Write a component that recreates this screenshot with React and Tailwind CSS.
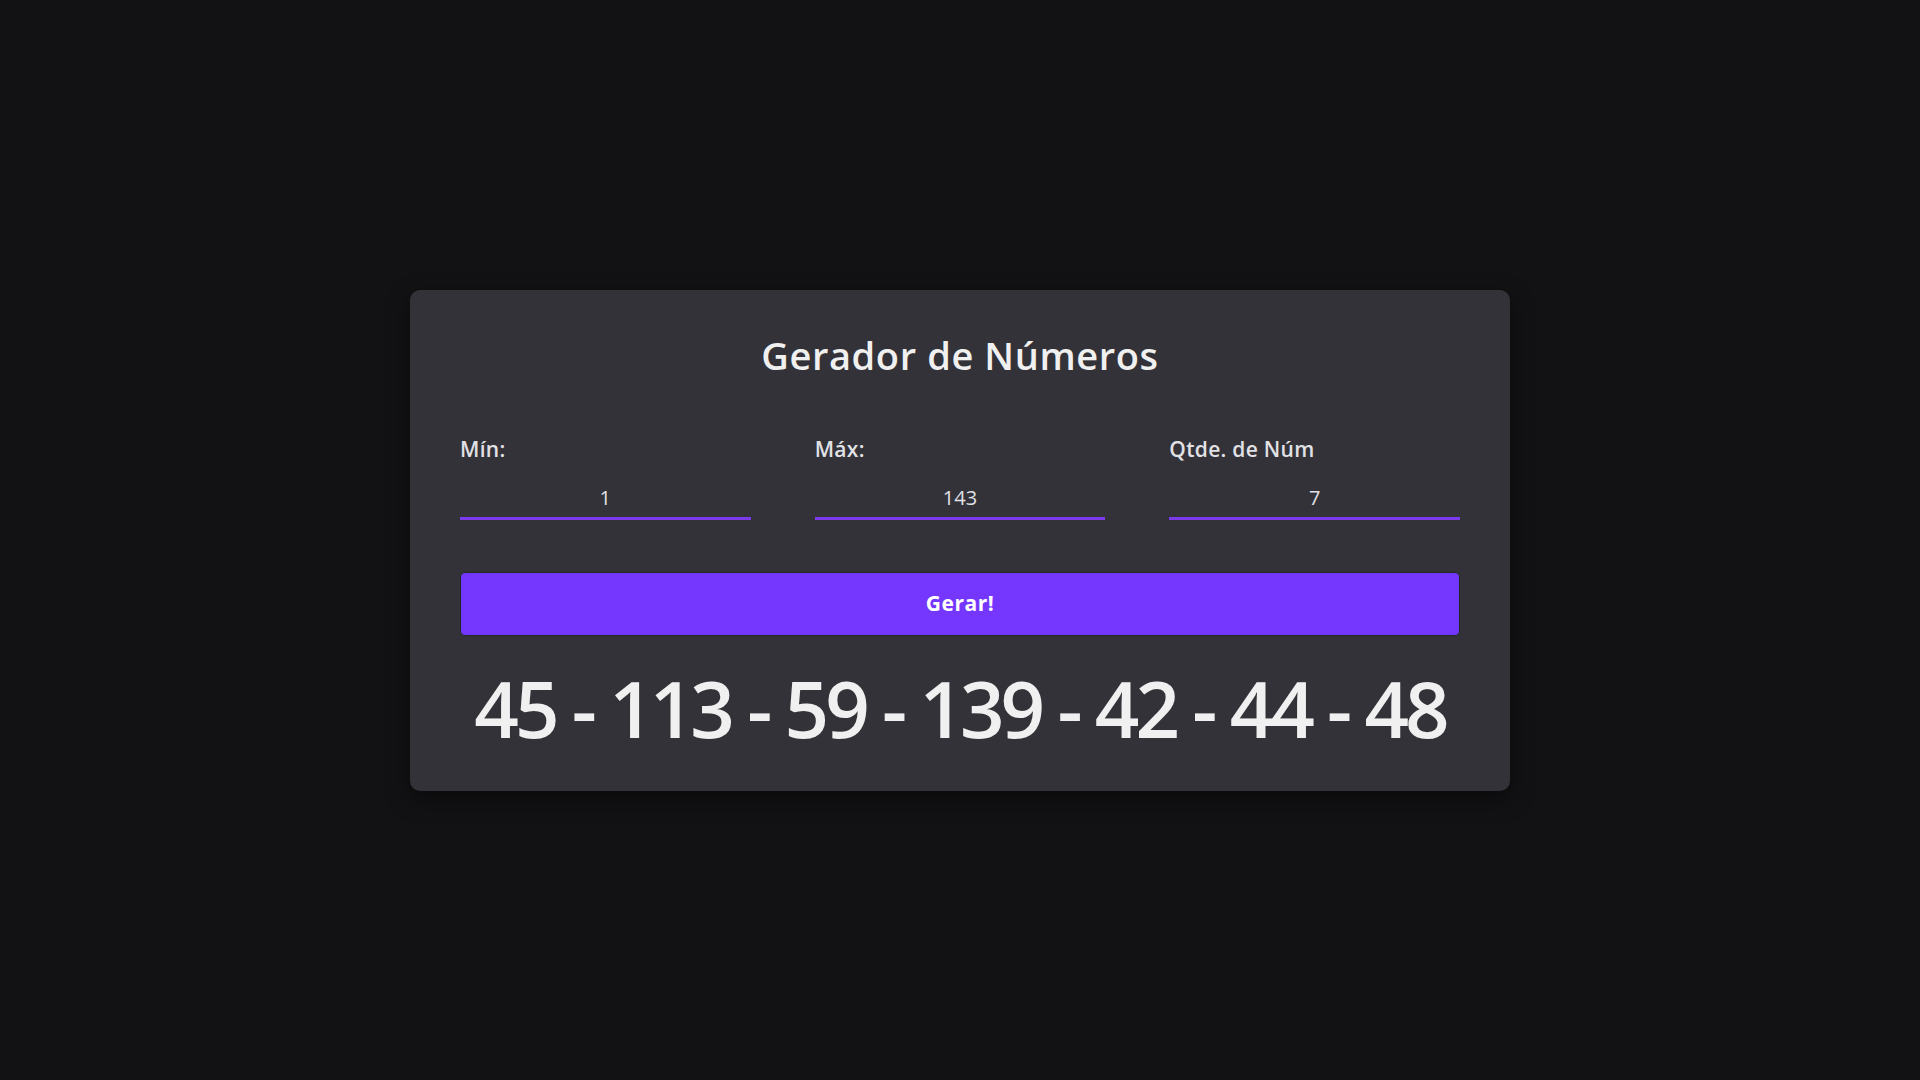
import React, { useState } from 'react';

const Field = ({ label, value, onChange }) => (
    <label className="flex flex-col">
        <span className="text-[21px] font-semibold text-[#e1e1e6] leading-[30px] tracking-[0.3px]">{label}</span>
        <input
            type="number"
            value={value}
            onChange={(e) => onChange(e.target.value)}
            className="mt-[14px] h-[42px] bg-transparent text-center text-[20px] text-[#e1e1e6] outline-none border-b-[3px] border-[#7c3aed] [appearance:textfield] [&::-webkit-inner-spin-button]:appearance-none"
        />
    </label>
);

const App = () => {
    const [min, setMin] = useState('1');
    const [max, setMax] = useState('143');
    const [qtd, setQtd] = useState('7');
    const [nums, setNums] = useState([45, 113, 59, 139, 42, 44, 48]);

    const gerar = () => {
        const a = Number(min), b = Number(max), n = Number(qtd);
        const out = [];
        for (let i = 0; i < n; i++) out.push(Math.floor(Math.random() * (b - a + 1)) + a);
        setNums(out);
    };

    return (
        <div className="min-h-screen bg-[#121214] flex items-center justify-center font-['Open_Sans',sans-serif]">
            <div className="w-[1100px] bg-[#323238] rounded-[10px] px-[50px] pt-[38px] pb-[33px] shadow-[0_8px_24px_rgba(0,0,0,0.45)]">
                <h1 className="text-center text-[38px] font-semibold text-[#f0f0f0] leading-[54px] tracking-[0.6px]">Gerador de Números</h1>

                <div className="mt-[52px] grid grid-cols-3 gap-16">
                    <Field label="Mín:" value={min} onChange={setMin} />
                    <Field label="Máx:" value={max} onChange={setMax} />
                    <Field label="Qtde. de Núm" value={qtd} onChange={setQtd} />
                </div>

                <button
                    onClick={gerar}
                    className="mt-[52px] w-full h-[64px] rounded-[5px] bg-[#7537fe] border border-[#1f2a22] text-white text-[21px] font-bold tracking-[0.5px]"
                >
                    Gerar!
                </button>

                <p className="mt-[22px] whitespace-nowrap text-center text-[78px] font-semibold leading-[100px] text-[#f0f0f0] tracking-[-4px]">
                    {nums.join(' - ')}
                </p>
            </div>
        </div>
    );
};

export default App;
